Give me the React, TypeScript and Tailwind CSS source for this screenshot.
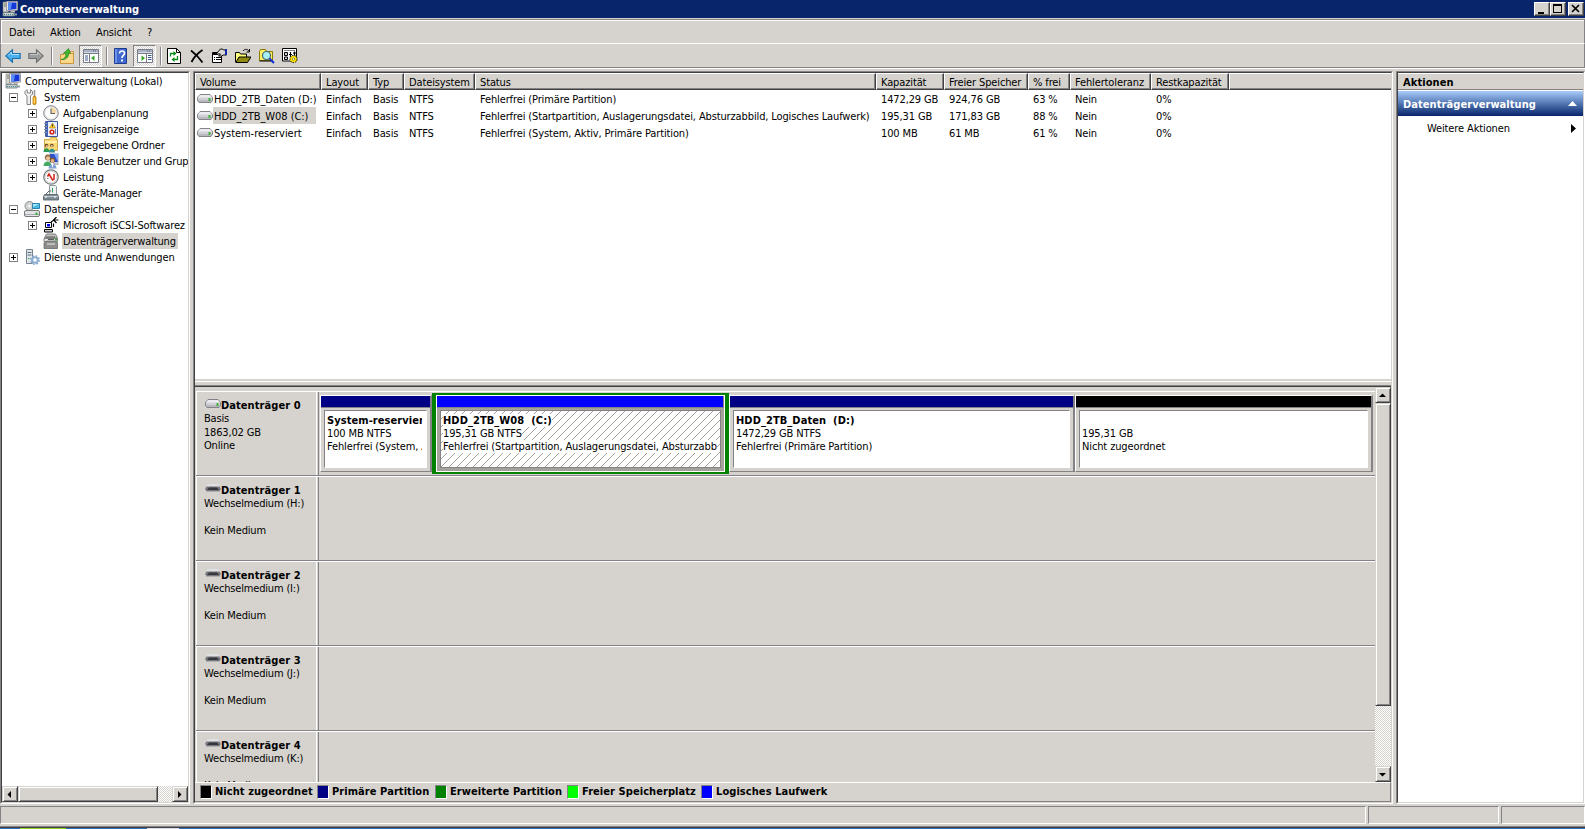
import React from 'react';
import { clsx } from 'clsx';

type IconName =
  | 'computer'
  | 'tools'
  | 'clock'
  | 'events'
  | 'shared'
  | 'users'
  | 'perf'
  | 'device'
  | 'storage'
  | 'iscsi'
  | 'disks'
  | 'services';

interface TreeItem {
  label: string;
  icon: IconName;
  level: 0 | 1 | 2;
  expander?: '+' | '-';
  selected?: boolean;
}

const TREE: TreeItem[] = [
  { label: 'Computerverwaltung (Lokal)', icon: 'computer', level: 0 },
  { label: 'System', icon: 'tools', level: 1, expander: '-' },
  { label: 'Aufgabenplanung', icon: 'clock', level: 2, expander: '+' },
  { label: 'Ereignisanzeige', icon: 'events', level: 2, expander: '+' },
  { label: 'Freigegebene Ordner', icon: 'shared', level: 2, expander: '+' },
  { label: 'Lokale Benutzer und Gruppen', icon: 'users', level: 2, expander: '+' },
  { label: 'Leistung', icon: 'perf', level: 2, expander: '+' },
  { label: 'Geräte-Manager', icon: 'device', level: 2 },
  { label: 'Datenspeicher', icon: 'storage', level: 1, expander: '-' },
  { label: 'Microsoft iSCSI-Softwarez', icon: 'iscsi', level: 2, expander: '+' },
  { label: 'Datenträgerverwaltung', icon: 'disks', level: 2, selected: true },
  { label: 'Dienste und Anwendungen', icon: 'services', level: 1, expander: '+' },
];

const COLUMNS = [
  { label: 'Volume', width: 'w-[126px]' },
  { label: 'Layout', width: 'w-[47px]' },
  { label: 'Typ', width: 'w-[36px]' },
  { label: 'Dateisystem', width: 'w-[71px]' },
  { label: 'Status', width: 'w-[401px]' },
  { label: 'Kapazität', width: 'w-[68px]' },
  { label: 'Freier Speicher', width: 'w-[84px]' },
  { label: '% frei', width: 'w-[42px]' },
  { label: 'Fehlertoleranz', width: 'w-[81px]' },
  { label: 'Restkapazität', width: 'w-[78px]' },
];

const VOLUMES = [
  ['HDD_2TB_Daten (D:)', 'Einfach', 'Basis', 'NTFS', 'Fehlerfrei (Primäre Partition)', '1472,29 GB', '924,76 GB', '63 %', 'Nein', '0%'],
  ['HDD_2TB_W08 (C:)', 'Einfach', 'Basis', 'NTFS', 'Fehlerfrei (Startpartition, Auslagerungsdatei, Absturzabbild, Logisches Laufwerk)', '195,31 GB', '171,83 GB', '88 %', 'Nein', '0%'],
  ['System-reserviert', 'Einfach', 'Basis', 'NTFS', 'Fehlerfrei (System, Aktiv, Primäre Partition)', '100 MB', '61 MB', '61 %', 'Nein', '0%'],
];

const REMOVABLE = [
  { name: 'Datenträger 1', medium: 'Wechselmedium (H:)' },
  { name: 'Datenträger 2', medium: 'Wechselmedium (I:)' },
  { name: 'Datenträger 3', medium: 'Wechselmedium (J:)' },
  { name: 'Datenträger 4', medium: 'Wechselmedium (K:)' },
];

const LEGEND = [
  { label: 'Nicht zugeordnet', color: 'bg-black', width: 'w-[117px]' },
  { label: 'Primäre Partition', color: 'bg-[#000084]', width: 'w-[118px]' },
  { label: 'Erweiterte Partition', color: 'bg-[#008200]', width: 'w-[132px]' },
  { label: 'Freier Speicherplatz', color: 'bg-[#00ff00]', width: 'w-[134px]' },
  { label: 'Logisches Laufwerk', color: 'bg-[#0000ff]', width: 'w-[130px]' },
];

const RAISED =
  'border border-t-[#d6d3ce] border-l-[#d6d3ce] border-r-[#424142] border-b-[#424142] shadow-[inset_1px_1px_0_#fff,inset_-1px_-1px_0_#848284]';
const DITHER = 'bg-[repeating-conic-gradient(#fff_0_25%,#d6d3ce_0_50%)] bg-[length:2px_2px]';

function Svg({ children, w = 16, h = 16 }: { children: React.ReactNode; w?: number; h?: number }) {
  return (
    <svg width={w} height={h} viewBox={`0 0 ${w} ${h}`} className="block shrink-0" fill="none">
      {children}
    </svg>
  );
}

function ComputerIcon() {
  return (
    <Svg>
      <path d="M1 1h5v10H1z" fill="#d8d8d4" stroke="#777" strokeWidth=".6" />
      <path d="M2 3h3M2 5h3" stroke="#6b7b6b" />
      <path d="M4.500.500h11v8.500l-11 1z" fill="#e8e8e4" stroke="#9a9a98" />
      <path d="M6 1.500h8.500v6.500L6 9z" fill="#1437d8" />
      <path d="M6 1.500h4l-1 7-3 .500z" fill="#5d8cf5" />
      <path d="M9 9.500h4v2H8z" fill="#b8b8b4" />
      <path d="M1 11.500h11v3.500H1z" fill="#c9cdd0" stroke="#69797f" strokeWidth=".8" />
      <path d="M2 13.500h9" stroke="#3e8d8d" strokeDasharray="1 1" />
      <path d="M12 12.500h3v2h-3z" fill="#8b9aa4" />
    </Svg>
  );
}

function TreeIcon({ name }: { name: IconName }) {
  switch (name) {
    case 'computer':
      return <ComputerIcon />;
    case 'tools':
      return (
        <Svg>
          <path d="M3 .500L1 2.500V5l2 2v8.500h3.500V7l2-2V2.500L6.500.500V4h-3z" fill="#f1f1f1" stroke="#777" strokeWidth=".9" />
          <path d="M10.500 1v7" stroke="#999" strokeWidth="1.600" />
          <path d="M9 9l.500-1.500h2L12 9v6l-1 .500H10L9 15z" fill="#f2b01e" stroke="#b87a08" strokeWidth=".8" />
          <path d="M10.300 9v5" stroke="#ffe07a" />
        </Svg>
      );
    case 'clock':
      return (
        <Svg>
          <circle cx="8" cy="8" r="7.300" fill="#dfe2e6" stroke="#85888e" />
          <circle cx="8" cy="8" r="5.800" fill="#fdfdfb" />
          <path d="M8 8V2.200A5.800 5.800 0 0 1 13.800 8z" fill="#f6d9a2" />
          <path d="M8 3.500V8.500h4" stroke="#5a5f68" strokeWidth="1.100" />
        </Svg>
      );
    case 'events':
      return (
        <Svg>
          <path d="M2.500.5h12v15h-12z" fill="#e9eefb" stroke="#3b58a4" />
          <path d="M3 1h2v14H3z" fill="#4464b4" />
          <path d="M1 2.500h3M1 5.500h3M1 8.500h3M1 11.500h3" stroke="#8a93a8" />
          <path d="M9.500 2l3 5h-6z" fill="#ffcf2e" stroke="#b77c00" strokeWidth=".6" />
          <path d="M9.500 3.500v2" stroke="#222" />
          <circle cx="9" cy="11" r="2.600" fill="#d3271d" />
          <path d="M8 10l2 2m0-2l-2 2" stroke="#fff" strokeWidth=".8" />
          <path d="M12.500 8v5" stroke="#6479b5" />
        </Svg>
      );
    case 'shared':
      return (
        <Svg>
          <path d="M1.500 2.500h5l1-2h6v2h1v11h-13z" fill="#f7d873" stroke="#c79a35" strokeWidth=".8" />
          <path d="M2 4h12v2H2z" fill="#fff0b0" />
          <circle cx="3.500" cy="8.500" r="1.800" fill="#6b4a2a" />
          <path d="M.5 15c0-5 6-5 6 0z" fill="#2f9a56" />
          <circle cx="8.800" cy="8.500" r="1.800" fill="#6b4a2a" />
          <path d="M6 15.500c0-5 6-5 6 0z" fill="#2e8f93" />
          <circle cx="3.800" cy="9" r="1.100" fill="#f1c59d" />
          <circle cx="8.800" cy="9" r="1.100" fill="#f1c59d" />
        </Svg>
      );
    case 'users':
      return (
        <Svg>
          <path d="M6.500.5h9v9h-9z" fill="#2c4fd0" stroke="#c9cdd4" />
          <path d="M11 1h4v8z" fill="#7ea6f2" />
          <path d="M10 10h5l1 2h-6z" fill="#b9bcc2" />
          <circle cx="4.800" cy="4.500" r="2.900" fill="#8b673e" />
          <circle cx="5" cy="5.300" r="2" fill="#efc39a" />
          <path d="M.5 13c0-6 8-6 8 0z" fill="#45a860" />
          <circle cx="9.500" cy="7" r="2.600" fill="#7a5532" />
          <circle cx="9.500" cy="7.800" r="1.800" fill="#e7b083" />
          <path d="M5.500 15.500c0-6 8-6 8 0z" fill="#7f9fd2" />
          <path d="M8.500 11h2l-1 4z" fill="#fff" />
        </Svg>
      );
    case 'perf':
      return (
        <Svg>
          <circle cx="8" cy="8" r="7.200" fill="#fff" stroke="#77797b" strokeWidth="1.300" />
          <circle cx="8" cy="8" r="5.800" stroke="#cfcfcf" strokeWidth=".8" />
          <path d="M4.500 7.500L6 5l3.500 6 1.500-1V5" stroke="#d41f17" strokeWidth="1.500" />
          <path d="M4 9.500h1.500" stroke="#888" />
        </Svg>
      );
    case 'device':
      return (
        <Svg>
          <path d="M6.500.5h6l1 1v9h-7z" fill="#eef1f1" stroke="#8f9a9c" />
          <path d="M9.500 3v4.500" stroke="#35a15b" />
          <path d="M3 9l3-3h2" stroke="#5c666c" />
          <path d="M1.500 9.500h13l1 2v3.500H.5v-3.500z" fill="#7f8b93" stroke="#525c63" strokeWidth=".8" />
          <path d="M1 11.500h14" stroke="#c2ccd1" />
          <path d="M3 11v2m9-2v2" stroke="#fff" />
        </Svg>
      );
    case 'storage':
      return (
        <Svg>
          <circle cx="5.500" cy="5" r="4.500" fill="#cfd3d2" stroke="#8d9290" />
          <circle cx="5.500" cy="5" r="1.200" fill="#fff" />
          <path d="M8.500 2.500h7v5h-7z" fill="#46b9e5" stroke="#2f83ad" />
          <path d="M9 3h6l-6 3z" fill="#a5e5fa" />
          <rect x=".5" y="9.500" width="15" height="6" rx="1.500" fill="#e3e3e6" stroke="#77777c" />
          <path d="M1 13.500h14" stroke="#adadb4" />
          <path d="M11.500 11.500h2v2.500h-2z" fill="#35b234" />
        </Svg>
      );
    case 'iscsi':
      return (
        <Svg>
          <path d="M2.500 5.500h6v5h-6z" fill="#fff" stroke="#000" />
          <path d="M4 7h3v2.500H4z" fill="#0000e8" />
          <path d="M1.500 12.500h8v2.500h-8z" fill="#d6d3ce" stroke="#000" />
          <path d="M8 5l3-2M13.500 0L10.500 3l3 3M11 3h4.500M10.500 10V6.500" stroke="#000" strokeWidth="1.200" />
        </Svg>
      );
    case 'disks':
      return (
        <Svg>
          <path d="M3.500 1h9l2 4h-13z" fill="#bfc0bd" stroke="#7e7f7c" />
          <path d="M1 5.500h13.500v3H1z" fill="#e9e9e6" stroke="#818280" />
          <path d="M3 4h9M5 6.500h6" stroke="#5a5b59" />
          <path d="M1 10l3-2h9l1.500 2v5.500H1z" fill="#8e8f8c" stroke="#686967" strokeWidth=".8" />
          <path d="M4 11h8" stroke="#ededeb" />
          <path d="M12 6h2v1.500h-2z" fill="#3da43c" />
        </Svg>
      );
    case 'services':
      return (
        <Svg>
          <path d="M2.500.5h6v14h-6z" fill="#dfe6ec" stroke="#77858f" />
          <path d="M3.500 3.500h4M3.500 6h4" stroke="#5c6b77" />
          <path d="M4 9.500h1.500" stroke="#3aa33a" />
          <circle cx="11" cy="11" r="2.800" stroke="#8fb0d4" strokeWidth="2" />
          <circle cx="11" cy="11" r="4.200" stroke="#7fa3cb" strokeWidth="1.400" strokeDasharray="1.700 1.600" />
        </Svg>
      );
  }
}

function DriveIcon() {
  return (
    <Svg w={16} h={9}>
      <path d="M3 .5h10l2.500 3v3L14 8.500H2L.5 6.500v-3z" fill="#d0d0d6" stroke="#77777d" strokeWidth=".9" />
      <path d="M3 1h10l2 2.500H1z" fill="#ececf0" />
      <path d="M1 7h14" stroke="#a0a0a8" />
      <path d="M11.500 4h2v3h-2z" fill="#3fb03b" />
    </Svg>
  );
}

function RemovableIcon() {
  return (
    <Svg w={16} h={9}>
      <path d="M2.500 0h11l1 2.500h-13z" fill="#dfe0e4" />
      <path d="M1.500 2.500h13l1.500 2.500L14.500 7h-13L0 5z" fill="#77797f" />
      <path d="M4 3.500h8l2 2.500H2z" fill="#35373c" />
      <path d="M1 7.500h14" stroke="#b0b0b2" />
    </Svg>
  );
}

function Bold({ children, className }: { children: React.ReactNode; className?: string }) {
  return <span className={clsx('font-bold tracking-[0.07px]', className)}>{children}</span>;
}

// Two-tone sunken frame of the classic theme
function Sunken({ children, className }: { children: React.ReactNode; className: string }) {
  return (
    <div className={clsx('flex border border-t-[#848284] border-l-[#848284] border-r-white border-b-white', className)}>
      <div className="flex min-w-0 flex-1 flex-col border border-t-[#424142] border-l-[#424142] border-r-[#d6d3ce] border-b-[#d6d3ce]">{children}</div>
    </div>
  );
}

function TitleBar() {
  return (
    <header className="flex h-[18px] shrink-0 items-center bg-[#08246b] pl-0.5 text-white">
      <ComputerIcon />
      <Bold className="ml-[2px] flex-1 pt-px">Computerverwaltung</Bold>
      <div className="flex pr-px">
        <CaptionButton>
          <path d="M4 10h6v2H4z" fill="#000" />
        </CaptionButton>
        <CaptionButton>
          <path d="M3 2h9v9H3zM4 4v6h7V4z" fill="#000" fillRule="evenodd" />
        </CaptionButton>
        <div className="w-0.5" />
        <CaptionButton>
          <path d="M4 3l7 7M11 3l-7 7" stroke="#000" strokeWidth="1.700" />
        </CaptionButton>
      </div>
    </header>
  );
}

function CaptionButton({ children }: { children: React.ReactNode }) {
  return (
    <button type="button" className="h-[14px] w-4 border border-t-white border-l-white border-r-[#424142] border-b-[#424142] bg-[#d6d3ce] shadow-[inset_-1px_-1px_0_#848284]">
      <svg width="14" height="12" viewBox="1 1 14 12" className="block" fill="none">
        {children}
      </svg>
    </button>
  );
}

function MenuBar() {
  return (
    <nav className="mt-px flex h-[25px] shrink-0 items-center border border-t-[#848284] border-l-[#848284] border-r-[#848284] border-b-white pt-0.5 pl-2 shadow-[inset_1px_1px_0_#fff]">
      <span className="w-[41px]">Datei</span>
      <span className="w-[46px]">Aktion</span>
      <span className="w-[51px]">Ansicht</span>
      <span>?</span>
    </nav>
  );
}

function Separator() {
  return <div className="h-[18px] w-0.5 border-l border-[#848284] bg-white" />;
}

function ConsoleIcon({ flip }: { flip?: boolean }) {
  return (
    <Svg>
      <path d="M.5 1.500h15v13H.5z" fill="#fff" stroke="#777c88" />
      <path d="M1 2h14v2.500H1z" fill="#aab3c6" />
      <path d="M10 3h4" stroke="#536081" strokeDasharray="1 1" />
      <path d="M1 5.500h14" stroke="#777c88" />
      {flip ? (
        <>
          <path d="M9.500 6v8" stroke="#777c88" />
          <path d="M11 7.500h3.500M11 9.500h3.500M11 11.500h3.500" stroke="#39588f" />
          <path d="M4.500 7.500L8 10l-3.500 3z" fill="#36a527" />
        </>
      ) : (
        <>
          <path d="M6.500 6v8" stroke="#777c88" />
          <path d="M2 8h3M2 10h3M2 12h3" stroke="#39588f" />
          <path d="M11.500 7.500L8 10l3.500 3z" fill="#36a527" />
        </>
      )}
    </Svg>
  );
}

function Toolbar() {
  return (
    <div className="flex h-6 shrink-0 items-center border-x border-b border-[#848284] pt-px pl-1">
      <div className="w-[23px]">
        <Svg>
          <path d="M.8 8l6.700-6.200v3.700h7.700v5H7.500v3.700z" fill="#4ab1ee" stroke="#1971ac" strokeWidth="1.100" />
          <path d="M3 7.500L6.500 4v2.500H14" stroke="#a8e0fd" />
        </Svg>
      </div>
      <div className="w-[23px]">
        <Svg>
          <path d="M15.200 8L8.500 1.800v3.700H.8v5h7.700v3.700z" fill="#9a9c9d" stroke="#6d6f70" strokeWidth="1.100" />
          <path d="M2 6.500h7.500V4l3.500 3.500" stroke="#c6c8c9" />
        </Svg>
      </div>
      <Separator />
      <div className="ml-[6px] w-[20px]">
        <Svg>
          <path d="M1.500 6.500h3.500v-2h9.500v11h-13z" fill="#f9d88a" stroke="#cb9640" />
          <path d="M9.500 3.500h5v2h-5z" fill="#fbe3a4" stroke="#cb9640" />
          <path d="M2 11.500C6 11 7.500 8 6.500 5L4.500 5.500 9.500.5l2 5-2-.5c.5 4.500-3 7-7.500 6.500z" fill="#43b82f" stroke="#247f1b" strokeWidth=".7" />
        </Svg>
      </div>
      <div className={clsx('flex h-[22px] w-[23px] items-center justify-center border border-t-[#848284] border-l-[#848284] border-r-white border-b-white', DITHER)}>
        <ConsoleIcon />
      </div>
      <div className="w-1" />
      <Separator />
      <div className="ml-[5px] w-5">
        <Svg>
          <path d="M1.500.5h12v15h-12z" fill="#3d67cf" stroke="#213c8d" />
          <path d="M2 1h2v14H2z" fill="#6c91e9" />
          <path d="M6.500 5.500c0-3.500 5-3 5-.3C11.500 7.500 9 7.500 9 10" stroke="#fff" strokeWidth="1.700" />
          <path d="M8 11.500h2v2H8z" fill="#fff" />
        </Svg>
      </div>
      <div className={clsx('flex h-[22px] w-[23px] items-center justify-center border border-t-[#848284] border-l-[#848284] border-r-white border-b-white', DITHER)}>
        <ConsoleIcon flip />
      </div>
      <div className="w-1" />
      <Separator />
      <div className="ml-1 w-[23px]">
        <Svg>
          <path d="M1.500.5h9l4 4v11h-13z" fill="#fff" stroke="#000" />
          <path d="M10.500.5v4h4" stroke="#000" />
          <path d="M4.500 8.500V5.500h4M11.500 8v3.500h-4" stroke="#0a8a18" strokeWidth="1.300" />
          <path d="M7.500 3L10.500 5.500 7.500 8zM8.500 9v5L5.500 11.500z" fill="#0a8a18" />
        </Svg>
      </div>
      <div className="w-[22px]">
        <Svg>
          <path d="M2 2.500c4 3 8 7 11.500 12M13.500 2C9 5 5 9 2.500 14" stroke="#000" strokeWidth="1.800" />
        </Svg>
      </div>
      <div className="w-6">
        <Svg>
          <path d="M1.500 4.500h9v10h-9z" fill="#fff" stroke="#000" />
          <path d="M3 9.500h1M5 9.500h5M3 11.500h1M5 11.500h5" stroke="#000" />
          <path d="M2 5h5v2H2z" fill="#000" />
          <path d="M4.500 6.500l5-5.500h2l1 1h3v5h-3l-2 1h-3l2-2H7z" fill="#d9d8d5" stroke="#000" />
          <path d="M14 1h2v6h-2z" fill="#102ca8" />
        </Svg>
      </div>
      <div className="w-6">
        <Svg>
          <path d="M.5 14V4.500h4l1 1.500h6v3" fill="#ffff7a" stroke="#000" />
          <path d="M.8 14.500L4 9h12l-3.500 5.500z" fill="#8f8a0f" stroke="#000" />
          <path d="M8 3c2-2.500 5-2 6 .5M14.500 1v3h-3" stroke="#000" />
        </Svg>
      </div>
      <div className="w-[23px]">
        <Svg>
          <path d="M.5 3.500l1-2h5l1 2h6v9H.5z" fill="#ffef62" stroke="#8a7a00" />
          <path d="M.5 13h12.500" stroke="#000" />
          <circle cx="7.500" cy="7.500" r="4" fill="#a8f0f5" stroke="#43666c" strokeWidth="1.200" />
          <path d="M10.500 10.500l4.500 4.500" stroke="#112bd5" strokeWidth="2" />
        </Svg>
      </div>
      <Svg>
        <path d="M.5.500h14v12.500H.5z" fill="#fff" stroke="#000" />
        <path d="M2 2.500h11" stroke="#848284" />
        <path d="M2.500 4.500h3v3h-3zM2.500 9h3v2.500h-3z" fill="#ccc" stroke="#000" />
        <path d="M8.500 4v5M12.500 3.500v4M7 6.500h3M11 5h3" stroke="#000" strokeWidth="1.200" />
        <circle cx="11.500" cy="11" r="3.600" fill="#ffe600" stroke="#000" strokeDasharray="1.500 1" />
        <circle cx="11.500" cy="11" r="1.200" fill="#fff" stroke="#665500" strokeWidth=".6" />
      </Svg>
    </div>
  );
}

function Expander({ sign }: { sign?: '+' | '-' }) {
  if (!sign) return <div className="w-[9px] shrink-0" />;
  return (
    <svg width="9" height="9" viewBox="0 0 9 9" className="shrink-0" shapeRendering="crispEdges">
      <path d="M0 0h9v9H0z" fill="#848284" />
      <path d="M1 1h7v7H1z" fill="#fff" />
      <path d="M2 4h5v1H2z" fill="#000" />
      {sign === '+' && <path d="M4 2h1v5H4z" fill="#000" />}
    </svg>
  );
}

function Triangle({ dir }: { dir: 'left' | 'right' | 'up' | 'down' }) {
  const d = {
    left: 'M6 1v7L2.500 4.500z',
    right: 'M3 1v7l3.500-3.500z',
    up: 'M1 6h7L4.500 2.500z',
    down: 'M1 3h7L4.500 6.500z',
  }[dir];
  return (
    <svg width="9" height="9" viewBox="0 0 9 9" className="-ml-px">
      <path d={d} fill="#000" />
    </svg>
  );
}

function ScrollButton({ dir }: { dir: 'left' | 'right' | 'up' | 'down' }) {
  return (
    <button type="button" className={clsx('flex size-4 shrink-0 items-center justify-center bg-[#d6d3ce]', RAISED)}>
      <Triangle dir={dir} />
    </button>
  );
}

function TreePane() {
  return (
    <Sunken className="w-[190px] shrink-0 bg-white">
      <div className="flex-1 overflow-hidden tracking-[-0.15px]">
        {TREE.map((item) => (
          <div key={item.label} className="flex h-4 items-center">
            {item.level === 0 && <div className="w-[3px] shrink-0" />}
            {item.level === 1 && <div className="w-[7px] shrink-0" />}
            {item.level === 2 && <div className="w-[26px] shrink-0" />}
            {item.level > 0 && (
              <div className="mr-[6px] flex pt-px">
                <Expander sign={item.expander} />
              </div>
            )}
            <TreeIcon name={item.icon} />
            <span className={clsx('ml-[3px] h-4 pr-0.5 pl-px leading-[18px] whitespace-nowrap', item.selected && 'bg-[#d6d3ce]')}>{item.label}</span>
          </div>
        ))}
      </div>
      <div className={clsx('flex h-4 shrink-0', DITHER)}>
        <ScrollButton dir="left" />
        <div className={clsx('w-[140px] bg-[#d6d3ce]', RAISED)} />
        <div className="flex-1" />
        <ScrollButton dir="right" />
      </div>
    </Sunken>
  );
}

function VolumeList() {
  return (
    <div className="h-[306px] shrink-0 bg-white">
      <div className="flex h-[17px] bg-[#d6d3ce]">
        {COLUMNS.map((col) => (
          <div key={col.label} className={clsx('shrink-0 border border-t-white border-l-white border-r-[#424142] border-b-[#424142] pl-1 leading-[17px] whitespace-nowrap shadow-[inset_-1px_-1px_0_#848284]', col.width)}>
            {col.label}
          </div>
        ))}
        <div className="flex-1 border border-r-0 border-t-white border-l-white border-b-[#424142] shadow-[inset_0_-1px_0_#848284]" />
      </div>
      {VOLUMES.map((row, i) => (
        <div key={row[0]} className="flex h-[17px] items-center leading-[20px] whitespace-nowrap">
          {row.map((cell, c) =>
            c === 0 ? (
              <div key={c} className={clsx('flex shrink-0 items-center pl-0.5', COLUMNS[c].width)}>
                <DriveIcon />
                <span className={clsx('h-[17px] pl-px tracking-[-0.05px]', i === 1 && 'w-[103px] bg-[#d6d3ce]')}>{cell}</span>
              </div>
            ) : (
              <div key={c} className={clsx('h-[17px] shrink-0 pl-[5px]', COLUMNS[c].width)}>
                {cell}
              </div>
            ),
          )}
        </div>
      ))}
    </div>
  );
}

interface PartitionProps {
  width: string;
  color: string;
  name?: string;
  lines: string[];
}

function Partition({ width, color, name, lines }: PartitionProps) {
  return (
    <div className={clsx('mt-0.5 flex h-[77px] shrink-0 flex-col border border-r-2 border-t-white border-l-white border-r-[#848284] border-b-[#848284]', width)}>
      <div className={clsx('h-[12px] shrink-0 border-b border-[#848284]', color)} />
      <div className="mx-[3px] mt-0.5 mb-[3px] flex-1 overflow-hidden border border-t-[#848284] border-l-[#848284] border-r-white border-b-white bg-white pt-[3px] pr-1 pl-0.5">
        <div className="overflow-hidden leading-[13px] whitespace-nowrap">
          <Bold className="block h-[13px]">{name}</Bold>
          {lines.map((line) => (
            <div key={line}>{line}</div>
          ))}
        </div>
      </div>
    </div>
  );
}

function SelectedPartition() {
  return (
    <div className="flex h-[81px] w-[297px] shrink-0 flex-col border-x-4 border-y-2 border-[#008200] bg-[#a5a29c]">
      <div className="flex flex-1 flex-col border border-white">
        <div className="h-[12px] shrink-0 border-r border-b border-[#848284] bg-[#0000ff]" />
        <div className="relative mx-[3px] mt-0.5 mb-[3px] flex-1 overflow-hidden border border-[#848284] bg-white pt-[3px] pr-[3px] pl-0.5">
          <svg className="absolute inset-0 size-full" shapeRendering="crispEdges">
            <defs>
              <pattern id="hatch" width="8" height="8" patternUnits="userSpaceOnUse">
                <path d="M0 7h1v1H0zM1 6h1v1H1zM2 5h1v1H2zM3 4h1v1H3zM4 3h1v1H4zM5 2h1v1H5zM6 1h1v1H6zM7 0h1v1H7z" fill="#a5a29c" />
              </pattern>
            </defs>
            <rect width="100%" height="100%" fill="url(#hatch)" />
          </svg>
          <div className="relative overflow-hidden leading-[13px] whitespace-nowrap">
            <Bold className="block h-[13px] w-fit bg-white">HDD_2TB_W08&nbsp; (C:)</Bold>
            <div className="w-fit bg-white">195,31 GB NTFS</div>
            <div className="w-fit bg-white">Fehlerfrei (Startpartition, Auslagerungsdatei, Absturzabbild, Logisches Laufwerk)</div>
          </div>
        </div>
      </div>
    </div>
  );
}

function DiskRow({ name, lines, removable, children }: { name: string; lines: string[]; removable?: boolean; children?: React.ReactNode }) {
  return (
    <div className="flex h-[85px] shrink-0 border-t border-b border-t-white border-b-[#848284]">
      <div className="w-[121px] shrink-0 border-r border-l border-white pt-[6px] pl-[6px] leading-[13px] tracking-[-0.17px] whitespace-nowrap">
        <div className="flex h-[14px] items-center">
          <div className="mr-px -mt-1 ml-[2px]">{removable ? <RemovableIcon /> : <DriveIcon />}</div>
          <Bold className="-ml-px">{name}</Bold>
        </div>
        {lines.map((line, i) => (
          <div key={i} className="h-[13.500px] pl-px">
            {line}
          </div>
        ))}
      </div>
      <div className="ml-px flex flex-1 border-l border-[#848284] pt-px pl-px">{children}</div>
    </div>
  );
}

function DiskView() {
  return (
    <div className="flex h-[395px] shrink-0">
      <div className="flex flex-1 flex-col overflow-hidden pt-1 pl-px">
        <DiskRow name="Datenträger 0" lines={['Basis', '1863,02 GB', 'Online']}>
          <Partition width="w-[112px]" color="bg-[#000084]" name="System-reserviert" lines={['100 MB NTFS', 'Fehlerfrei (System, Aktiv, Primäre Partition)']} />
          <SelectedPartition />
          <Partition width="w-[346px]" color="bg-[#000084]" name="HDD_2TB_Daten&nbsp; (D:)" lines={['1472,29 GB NTFS', 'Fehlerfrei (Primäre Partition)']} />
          <Partition width="w-[298px]" color="bg-black" lines={['195,31 GB', 'Nicht zugeordnet']} />
        </DiskRow>
        {REMOVABLE.map((disk) => (
          <DiskRow key={disk.name} name={disk.name} lines={[disk.medium, '', 'Kein Medium']} removable />
        ))}
      </div>
      <div className={clsx('flex w-4 shrink-0 flex-col', DITHER)}>
        <ScrollButton dir="up" />
        <div className={clsx('h-[303px] bg-[#d6d3ce]', RAISED)} />
        <div className="flex-1" />
        <ScrollButton dir="down" />
      </div>
    </div>
  );
}

function Legend() {
  return (
    <div className="flex flex-1 items-center border border-l-0 border-t-white border-r-[#848284] border-b-[#848284] pl-[5px]">
      {LEGEND.map((entry) => (
        <div key={entry.label} className={clsx('flex shrink-0 items-center whitespace-nowrap', entry.width)}>
          <div className={clsx('mr-[3px] h-[14px] w-3 border border-t-[#848284] border-l-[#848284] border-r-white border-b-white', entry.color)} />
          <Bold>{entry.label}</Bold>
        </div>
      ))}
    </div>
  );
}

function ActionsPane() {
  return (
    <Sunken className="flex-1 bg-white">
      <div className="h-[17px] border-t border-b border-t-white border-b-[#848284] bg-[#d6d3ce] pl-[5px] leading-[17px]">
        <Bold>Aktionen</Bold>
      </div>
      <div className="mt-px flex h-[25px] items-center justify-between bg-linear-to-b from-[#a9cdfb] to-[#08246b] pr-[6px] pl-[5px] text-white">
        <Bold className="pt-0.5">Datenträgerverwaltung</Bold>
        <svg width="9" height="5" viewBox="0 0 9 5">
          <path d="M0 5h9L4.500 0z" fill="#fff" />
        </svg>
      </div>
      <div className="flex h-6 items-center justify-between pr-[7px] pl-[29px]">
        <span className="pt-px">Weitere Aktionen</span>
        <svg width="5" height="9" viewBox="0 0 5 9">
          <path d="M0 0v9l5-4.500z" fill="#000" />
        </svg>
      </div>
    </Sunken>
  );
}

function StatusBar() {
  const cell = 'h-[18px] border border-t-[#848284] border-l-[#848284] border-r-white border-b-white';
  return (
    <footer className="flex h-[20px] shrink-0 gap-0.5">
      <div className={clsx('w-[1366px]', cell)} />
      <div className={clsx('w-[131px]', cell)} />
      <div className={clsx('flex-1', cell)} />
    </footer>
  );
}

export default function App() {
  return (
    <div className='flex h-[829px] w-[1585px] flex-col overflow-hidden bg-[#d6d3ce] font-["DejaVu_Sans_Condensed","DejaVu_Sans",sans-serif] text-[11px] leading-[14px] tracking-[-0.125px] text-black [font-stretch:condensed]'>
      <TitleBar />
      <MenuBar />
      <Toolbar />
      <div className="mb-0.5 flex h-[736px] shrink-0 gap-[3px] border-t border-white pt-0.5">
        <TreePane />
        <Sunken className="w-[1200px] shrink-0">
          <VolumeList />
          <div className="h-2 shrink-0 border-b border-[#424142]">
            <div className="mt-0.5 h-px bg-white" />
            <div className="mt-[3px] h-px bg-[#848284]" />
          </div>
          <DiskView />
          <Legend />
        </Sunken>
        <ActionsPane />
      </div>
      <StatusBar />
      <div className="h-0.5 shrink-0 border-t border-b border-t-[#848284] border-b-[#424142]" />
      <div className="flex flex-1 bg-[#2c6cb0] pl-5">
        <div className="w-[46px] bg-[#8fd820]" />
        <div className="ml-[81px] w-8 bg-[#d9dde6]" />
      </div>
    </div>
  );
}
